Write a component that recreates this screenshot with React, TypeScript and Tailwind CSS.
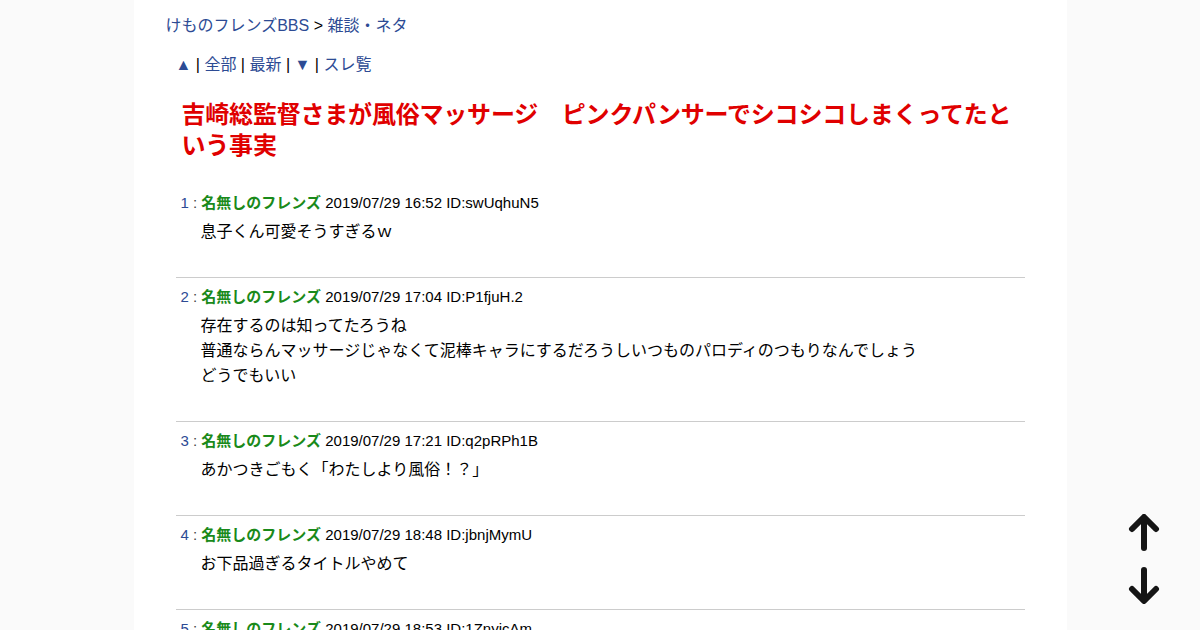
const posts = [
  {
    no: 1,
    date: "2019/07/29 16:52",
    id: "swUqhuN5",
    lines: ["息子くん可愛そうすぎるｗ"],
  },
  {
    no: 2,
    date: "2019/07/29 17:04",
    id: "P1fjuH.2",
    lines: [
      "存在するのは知ってたろうね",
      "普通ならんマッサージじゃなくて泥棒キャラにするだろうしいつものパロディのつもりなんでしょう",
      "どうでもいい",
    ],
  },
  {
    no: 3,
    date: "2019/07/29 17:21",
    id: "q2pRPh1B",
    lines: ["あかつきごもく「わたしより風俗！？」"],
  },
  {
    no: 4,
    date: "2019/07/29 18:48",
    id: "jbnjMymU",
    lines: ["お下品過ぎるタイトルやめて"],
  },
  {
    no: 5,
    date: "2019/07/29 18:53",
    id: "1ZnyicAm",
    lines: ["　"],
  },
];

function ScrollArrows() {
  return (
    <div className="fixed right-[40px] bottom-[26px] flex flex-col gap-[14px]">
      <a href="#top" className="block">
        <svg width="32" height="38" viewBox="0 0 32 38" fill="none" stroke="#151515" strokeWidth="6" strokeLinecap="round" strokeLinejoin="round">
          <path d="M16 34V5" />
          <path d="M4 15L16 3L28 15" />
        </svg>
      </a>
      <a href="#bottom" className="block">
        <svg width="32" height="38" viewBox="0 0 32 38" fill="none" stroke="#151515" strokeWidth="6" strokeLinecap="round" strokeLinejoin="round">
          <path d="M16 4V33" />
          <path d="M4 23L16 35L28 23" />
        </svg>
      </a>
    </div>
  );
}

export default function App() {
  return (
    <div
      className="min-h-screen bg-[#fafafa] text-black"
      style={{ fontFamily: '"Liberation Sans", "Noto Sans CJK JP", sans-serif' }}
    >
      <div id="top" className="mx-auto w-[933px] min-h-screen bg-white pt-[14px] pb-10">
        {/* Breadcrumb */}
        <div className="pl-[32px] text-[16px] leading-[24px]">
          <a className="text-[#2d4b94]" href="#">けものフレンズBBS</a>
          <span> &gt; </span>
          <a className="text-[#2d4b94]" href="#">雑談・ネタ</a>
        </div>

        {/* Thread nav */}
        <div className="mt-[15px] pl-[42px] text-[16px] leading-[24px]">
          <a className="text-[#2d4b94]" href="#">▲</a>
          <span> | </span>
          <a className="text-[#2d4b94]" href="#">全部</a>
          <span> | </span>
          <a className="text-[#2d4b94]" href="#">最新</a>
          <span> | </span>
          <a className="text-[#2d4b94]" href="#">▼</a>
          <span> | </span>
          <a className="text-[#2d4b94]" href="#">スレ覧</a>
        </div>

        {/* Title */}
        <h1 className="mt-[22px] pl-[48px] pr-[38px] text-[24px] font-bold leading-[31px] tracking-[-0.2px] text-[#e00000]">
          吉崎総監督さまが風俗マッサージ　ピンクパンサーでシコシコしまくってたという事実
        </h1>

        {/* Posts */}
        <div className="mx-[42px] mt-[23px]">
          {posts.map((p, i) => (
            <div
              key={p.no}
              className={
                i === 0
                  ? "pt-[8px] pb-[33px]"
                  : "border-t border-[#cccccc] pt-[8px] pb-[33px]"
              }
            >
              <div className="pl-[5px] text-[15px] leading-[22px]">
                <span className="text-[#2d4b94]">{p.no}</span>
                <span className="text-[#444]"> : </span>
                <span className="font-bold text-[#1a8a1a]">名無しのフレンズ</span>
                <span> {p.date} ID:{p.id}</span>
              </div>
              <div className="mt-[5px] pl-[25px] text-[16px] leading-[25px]">
                {p.lines.map((l, j) => (
                  <div key={j}>{l}</div>
                ))}
              </div>
            </div>
          ))}
        </div>
        <div id="bottom" />
      </div>
      <ScrollArrows />
    </div>
  );
}
